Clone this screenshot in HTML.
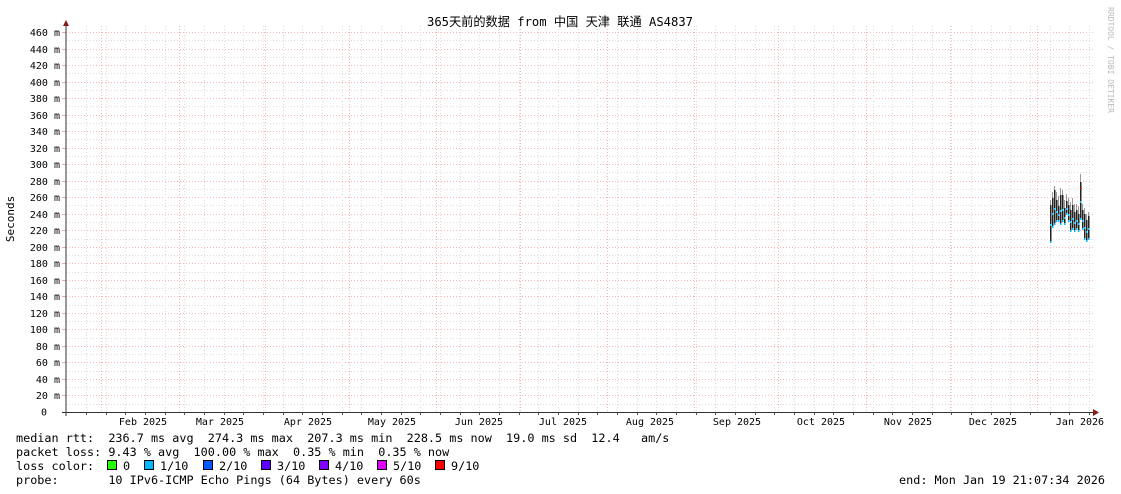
<!DOCTYPE html>
<html><head><meta charset="utf-8"><style>
html,body{margin:0;padding:0;background:#fff;width:1121px;height:494px;overflow:hidden}
svg{display:block}
.m{font-family:"DejaVu Sans Mono","Liberation Mono","Noto Sans CJK SC",monospace}
</style></head><body>
<svg id="g" width="1121" height="494" xmlns="http://www.w3.org/2000/svg">
<rect width="1121" height="494" fill="#fff"/>
<g id="grid"></g>
<g id="data"></g>
<line x1="66" y1="24" x2="66" y2="416" stroke="#333" stroke-width="1"/>
<line x1="62" y1="412.5" x2="1094" y2="412.5" stroke="#333" stroke-width="1"/>
<polygon points="63,26 69,26 66,20" fill="#8b1a1a"/>
<polygon points="1093,409 1093,416 1099,412.5" fill="#8b1a1a"/>
<text x="560" y="26" text-anchor="middle" class="m" font-size="12.5" fill="#000" textLength="266" lengthAdjust="spacingAndGlyphs">365天前的数据 from 中国 天津 联通 AS4837</text>
<text transform="translate(14,219) rotate(-90)" text-anchor="middle" class="m" font-size="11" fill="#000">Seconds</text>
<text transform="translate(1108,60) rotate(90)" text-anchor="middle" class="m" font-size="8" fill="#bbb">RRDTOOL / TOBI OETIKER</text>
<g id="ylab" class="m" font-size="10" fill="#000"></g>
<g id="xlab" class="m" font-size="10" fill="#000"></g>
<g class="m" font-size="11.8" fill="#000" style="white-space:pre">
<text x="16" y="442" xml:space="preserve">median rtt:  236.7 ms avg  274.3 ms max  207.3 ms min  228.5 ms now  19.0 ms sd  12.4   am/s</text>
<text x="16" y="456" xml:space="preserve">packet loss: 9.43 % avg  100.00 % max  0.35 % min  0.35 % now</text>
<text x="16" y="470" xml:space="preserve">loss color:  </text>
<text x="16" y="484" xml:space="preserve">probe:       10 IPv6-ICMP Echo Pings (64 Bytes) every 60s</text>
<text x="1105" y="484" text-anchor="end" xml:space="preserve">end: Mon Jan 19 21:07:34 2026</text>
</g>
<g id="leg" class="m" font-size="11.8"></g>
</svg>
<script>
var NS="http://www.w3.org/2000/svg";
function el(p,t,a,txt){var e=document.createElementNS(NS,t);for(var k in a)e.setAttribute(k,a[k]);if(txt!=null)e.textContent=txt;document.getElementById(p).appendChild(e);return e;}
for(var k=1;k<=46;k++){var y=Math.round(412-k*8.261)+0.5;
 el("grid","line",{x1:66,x2:1094,y1:y,y2:y,stroke:k%2==0?"#f4b8b8":"#dcdcdc","stroke-dasharray":"1,2"});
 if(k%2==0){el("ylab","text",{x:60,y:y+3.5,"text-anchor":"end"},(k*10)+" m");
  el("grid","line",{x1:62,x2:66,y1:y,y2:y,stroke:"#f0a8a8"});}
}
el("ylab","text",{x:47,y:415.5,"text-anchor":"end"},"0");
for(var x=86;x<1094;x+=19.67){var xx=Math.round(x)+0.5;
 el("grid","line",{x1:xx,x2:xx,y1:26,y2:412,stroke:"#dcdcdc","stroke-dasharray":"1,2"});
 el("grid","line",{x1:xx,x2:xx,y1:412,y2:415,stroke:"#555"});}
var mon=[101,179,265,349,436,520,607,694,778,866,950,1037];
mon.forEach(function(x){var xx=x+0.5;el("grid","line",{x1:xx,x2:xx,y1:26,y2:412,stroke:"#f4b8b8","stroke-dasharray":"1,2"});});
var labs=[[143,"Feb 2025"],[220,"Mar 2025"],[308,"Apr 2025"],[392,"May 2025"],[479,"Jun 2025"],[563,"Jul 2025"],[650,"Aug 2025"],[737,"Sep 2025"],[821,"Oct 2025"],[908,"Nov 2025"],[993,"Dec 2025"],[1080,"Jan 2026"]];
labs.forEach(function(l){el("xlab","text",{x:l[0],y:425,"text-anchor":"middle"},l[1]);});
var d=[[1050,205,243,200],[1052,198,228,192],[1054,190,225,186],[1056,200,222,192],[1058,206,222,196],[1060,195,225,188],[1062,195,222,190],[1064,208,225,200],[1066,201,215,194],[1068,205,222,198],[1070,210,232,202],[1072,205,230,198],[1074,212,232,204],[1076,210,230,204],[1078,214,232,206],[1080,182,220,174],[1082,210,230,204],[1084,214,240,208],[1086,220,242,214],[1088,216,240,212]];
d.forEach(function(b){
 el("data","rect",{x:b[0],y:b[3],width:1,height:b[1]-b[3],fill:"#999"});
 el("data","rect",{x:b[0],y:b[1],width:1.5,height:b[2]-b[1],fill:"#222"});
 var m=Math.round((b[1]+b[2])/2);
 el("data","rect",{x:b[0],y:m,width:1.5,height:2,fill:"#00bbff"});
 el("data","rect",{x:b[0],y:b[2]-2,width:1.5,height:2,fill:"#00bbff"});
});
el("data","rect",{x:1080,y:188,width:2,height:1,fill:"#ff0000"});
var sw=[[107,"#26ff00","0"],[144,"#00b8ff","1/10"],[203,"#0059ff","2/10"],[261,"#5e00ff","3/10"],[319,"#7e00ff","4/10"],[377,"#dd00ff","5/10"],[435,"#ff0000","9/10"]];
sw.forEach(function(s){el("leg","rect",{x:s[0]+0.5,y:460.5,width:9,height:9,fill:s[1],stroke:"#000"});
 el("leg","text",{x:s[0]+16,y:470,fill:"#000"},s[2]);});
</script>
</body></html>
